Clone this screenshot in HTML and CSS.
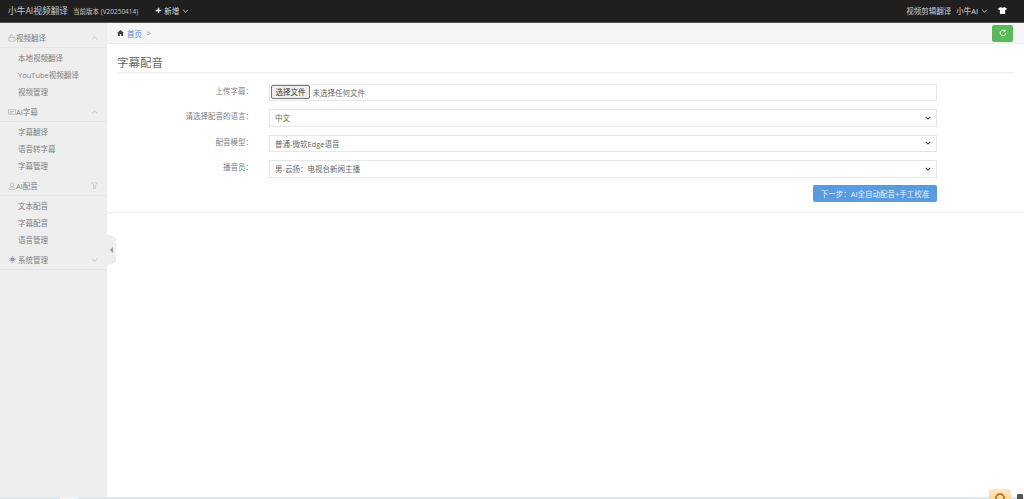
FILE: index.html
```html
<!DOCTYPE html>
<html lang="zh-CN">
<head>
<meta charset="utf-8">
<title>字幕配音</title>
<link rel="stylesheet" href="styles.css">
</head>
<body>
<header class="topbar">
  <span class="brand">小牛AI视频翻译</span>
  <span class="version">当前版本 (V20250414)</span>
  <span class="add"><svg class="plus" viewBox="0 0 8 8"><path d="M4 .8v6.4M.8 4h6.4"/></svg>新增<svg class="chev light" viewBox="0 0 8 5"><path d="M1 1l3 3 3-3"/></svg></span>
  <span class="spacer"></span>
  <span class="top-link">视频剪辑翻译</span>
  <span class="user">小牛AI<svg class="chev light" viewBox="0 0 8 5"><path d="M1 1l3 3 3-3"/></svg></span>
  <svg class="shirt" viewBox="0 0 10 8"><path d="M3.2 0L0 1.6l1 2 1-.4V8h6V3.2l1 .4 1-2L6.8 0C6.4 1.2 3.600 1.200 3.200 0z"/></svg>
</header>
<div class="main">
  <aside class="sidebar">
    <div class="group">
      <svg class="gicon" viewBox="0 0 9 9"><path d="M1 4h7v4H1zM2 4l1-3h2l1 3"/></svg><span>视频翻译</span>
      <svg class="chev end" viewBox="0 0 8 5"><path d="M1 4l3-3 3 3"/></svg>
    </div>
    <a class="item">本地视频翻译</a>
    <a class="item">YouTube视频翻译</a>
    <a class="item">视频管理</a>
    <div class="group">
      <svg class="gicon" viewBox="0 0 9 9"><path d="M.5 2h8v5h-8zM2 4h5M2 5.500h3"/></svg><span>AI字幕</span>
      <svg class="chev end" viewBox="0 0 8 5"><path d="M1 4l3-3 3 3"/></svg>
    </div>
    <a class="item">字幕翻译</a>
    <a class="item">语音转字幕</a>
    <a class="item">字幕管理</a>
    <div class="group">
      <svg class="gicon" viewBox="0 0 9 9"><circle cx="4.500" cy="3" r="2"/><path d="M1 8.500c0-4 7-4 7 0z"/></svg><span>AI配音</span>
      <svg class="filter end" viewBox="0 0 8 8"><path d="M.5 1h7L5 3.500V7.500H3V3.500z"/></svg>
    </div>
    <a class="item">文本配音</a>
    <a class="item">字幕配音</a>
    <a class="item">语音管理</a>
    <div class="group">
      <svg class="gear" viewBox="0 0 8 8"><circle cx="4" cy="4" r="2.400"/><circle cx="4" cy="4" r="3.200" class="teeth"/></svg><span class="gtext">系统管理</span>
      <svg class="chev end" viewBox="0 0 8 5"><path d="M1 1l3 3 3-3"/></svg>
    </div>
  </aside>
  <div class="collapse"><span class="tri"></span></div>
  <main class="content">
    <div class="crumbs">
      <svg class="home" viewBox="0 0 8 7"><path d="M4 0L0 3.600h1V7h2.200V4.800h1.600V7H7V3.600h1z"/></svg>
      <a class="crumb">首页</a><span class="sep">&gt;</span>
      <span class="spacer"></span>
      <button class="refresh"><svg viewBox="0 0 8 8"><path d="M6.800 4a2.800 2.800 0 1 1-.8-2M6.200.6v1.700H4.500"/></svg></button>
    </div>
    <section class="panel">
      <h1 class="title">字幕配音</h1>
      <form class="form">
        <div class="row">
          <label class="lbl">上传字幕：</label>
          <div class="box file"><span class="choose">选择文件</span><span>未选择任何文件</span></div>
        </div>
        <div class="row">
          <label class="lbl">请选择配音的语言：</label>
          <div class="box"><span>中文</span><svg class="sel" viewBox="0 0 8 5"><path d="M1 1l3 3 3-3"/></svg></div>
        </div>
        <div class="row">
          <label class="lbl">配音模型：</label>
          <div class="box"><span>普通-微软Edge语音</span><svg class="sel" viewBox="0 0 8 5"><path d="M1 1l3 3 3-3"/></svg></div>
        </div>
        <div class="row">
          <label class="lbl">播音员：</label>
          <div class="box"><span>男-云扬：电视台新闻主播</span><svg class="sel" viewBox="0 0 8 5"><path d="M1 1l3 3 3-3"/></svg></div>
        </div>
        <div class="actions"><button type="button" class="next">下一步：AI全自动配音+手工校准</button></div>
      </form>
    </section>
  </main>
</div>
<div class="bottom-strip"><span class="notch"></span></div>
<div class="widget"><span class="ring"></span></div>
<div class="corner-mark"></div>
</body>
</html>
```
FILE: styles.css
```css
* { box-sizing: border-box; }
html, body { margin: 0; height: 100%; overflow: hidden; }
body {
  font-family: "Open Sans", "Noto Sans CJK SC", sans-serif;
  font-size: 7.500px;
  color: #777;
  background: #fff;
  display: flex;
  flex-direction: column;
}
.topbar {
  height: 23px;
  flex: none;
  background: #1f1f1f;
  border-bottom: 1px solid #555;
  color: #ddd;
  display: flex;
  align-items: center;
  padding: 0 0 1px 8px;
}
.brand { font-size: 8.700px; color: #ccc; }
.version { margin-left: 5px; font-size: 6.500px; color: #ccc; }
.add { margin-left: 17px; display: flex; align-items: center; color: #ddd; }
.plus { width: 7px; height: 7px; margin-right: 2px; }
.plus path { stroke: #fff; stroke-width: 1.500; fill: none; }
.spacer { flex: 1; }
.top-link { color: #ccc; }
.user { margin-left: 5px; display: flex; align-items: center; }
.shirt { width: 9px; height: 7px; margin: 0 17px 0 10px; fill: #fff; }
.chev { width: 7px; height: 4px; margin-left: 3px; }
.chev path { stroke: #bbb; stroke-width: 1; fill: none; }
.chev.light path { stroke: #ddd; }
.main { flex: 1; display: flex; min-height: 0; position: relative; }
.sidebar {
  width: 107px;
  flex: none;
  background: #eee;
  color: #808080;
  padding-top: 5px;
}
.group {
  height: 20px;
  display: flex;
  align-items: center;
  padding: 0 9px 0 8px;
  border-bottom: 1px solid #e6e6e6;
  margin-bottom: 2px;
}
.item + .group { margin-top: 1px; }
.group .end { margin-left: auto; }
.gicon { width: 8px; height: 8px; fill: none; stroke: #aaa; stroke-width: .7; }
.gear { width: 7px; height: 7px; margin: 0 2px 0 1px; fill: #8a97a8; }
.gear .teeth { fill: none; stroke: #8a97a8; stroke-width: 1; stroke-dasharray: 1 1; }
.filter { width: 7px; height: 7px; fill: none; stroke: #bbb; stroke-width: .7; }
.item { display: block; height: 17px; line-height: 17px; padding-left: 18px; }
.collapse {
  position: absolute;
  left: 107px;
  top: 211px;
  width: 9px;
  height: 32px;
  background: #eee;
  clip-path: polygon(0 0, 100% 4px, 100% 28px, 0 100%);
  display: flex;
  align-items: center;
  justify-content: center;
}
.tri { border: 3px solid transparent; border-right-color: #999; border-left-width: 0; }
.content { flex: 1; min-width: 0; }
.crumbs {
  height: 21px;
  background: #f5f5f5;
  border-bottom: 1px solid #eee;
  display: flex;
  align-items: center;
  padding: 0 11px 0 10px;
}
.home { width: 7px; height: 6px; fill: #444; margin-right: 3px; }
.crumb { color: #4a8bd0; }
.sep { margin-left: 5px; color: #999; }
.refresh {
  width: 21px;
  height: 17px;
  padding: 0;
  border: 0;
  border-radius: 2px;
  background: #5cb85c;
  display: flex;
  align-items: center;
  justify-content: center;
}
.refresh svg { width: 8px; height: 8px; fill: none; stroke: #fff; stroke-width: .8; }
.panel { padding: 0 10px; border-bottom: 1px solid #eee; height: 169px; }
.title {
  margin: 0;
  height: 29px;
  padding-top: 10px;
  font-size: 11.500px;
  line-height: 17px;
  font-weight: 400;
  color: #666;
  border-bottom: 1px solid #eee;
}
.form { display: flex; flex-direction: column; padding-top: 10.500px; }
.row { display: flex; height: 18px; margin-bottom: 7.500px; }
.lbl { width: 136px; text-align: right; line-height: 15px; color: #808080; }
.box {
  margin-left: 16px;
  width: 668px;
  height: 17.500px;
  border: 1px solid #e5e6e7;
  display: flex;
  align-items: center;
  padding: 0 5px;
  justify-content: space-between;
  color: #666;
}
.box.file { justify-content: flex-start; padding-left: 1px; }
.choose {
  height: 14px;
  line-height: 12px;
  padding: 0 3.500px;
  margin-right: 2.500px;
  border: 1px solid #767676;
  border-radius: 2px;
  background: #efefef;
  color: #333;
}
.sel { width: 6px; height: 4px; }
.sel path { stroke: #444; stroke-width: 1.400; fill: none; }
.actions { display: flex; justify-content: flex-end; width: 820px; margin-top: -1px; }
.next {
  height: 17px;
  width: 124px;
  padding: 0;
  border: 0;
  border-radius: 2px;
  background: #5a9be0;
  color: #e4eefa;
  font: inherit;
}
.bottom-strip { position: absolute; left: 0; right: 0; bottom: 0; height: 2px; background: #dfe6ec; }
.notch { display: block; width: 18px; height: 2px; margin-left: 60px; background: #f4f4f4; }
.widget {
  position: absolute;
  right: 13px;
  bottom: 0;
  width: 22px;
  height: 10px;
  background: linear-gradient(#fde9c8, #fbd9a0);
  border-radius: 3px 3px 0 0;
  overflow: hidden;
  display: flex;
  justify-content: center;
}
.ring { width: 10px; height: 10px; margin-top: 4px; border: 2px solid #c47a20; border-radius: 50%; }
.corner-mark { position: absolute; right: 1px; bottom: 0; width: 6px; height: 5px; background: #555; border-radius: 1px 1px 0 0; }
```
